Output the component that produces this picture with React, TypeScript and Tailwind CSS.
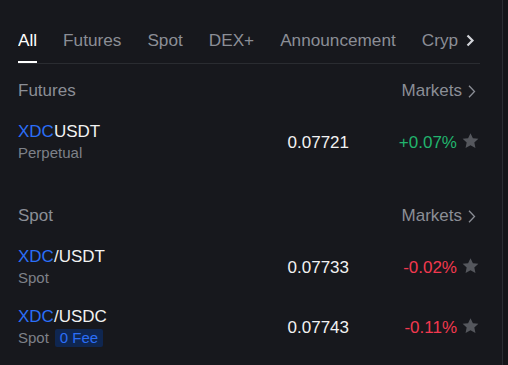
import React from 'react';

type Row = {
  base: string;
  sep: string;
  quote: string;
  sub: string;
  fee?: boolean;
  price: string;
  change: string;
  up: boolean;
};

const TABS = ['All', 'Futures', 'Spot', 'DEX+', 'Announcement', 'Crypto'];

const SECTIONS: { title: string; rows: Row[] }[] = [
  {
    title: 'Futures',
    rows: [{ base: 'XDC', sep: '', quote: 'USDT', sub: 'Perpetual', price: '0.07721', change: '+0.07%', up: true }],
  },
  {
    title: 'Spot',
    rows: [
      { base: 'XDC', sep: '/', quote: 'USDT', sub: 'Spot', price: '0.07733', change: '-0.02%', up: false },
      { base: 'XDC', sep: '/', quote: 'USDC', sub: 'Spot', fee: true, price: '0.07743', change: '-0.11%', up: false },
    ],
  },
];

function Star() {
  return (
    <svg width="19" height="18" viewBox="0 0 24 24" className="shrink-0">
      <path
        d="M12 1.5l3.2 6.7 7.3.9-5.4 5 1.5 7.3L12 17.8l-6.6 3.6 1.5-7.3-5.4-5 7.3-.9z"
        fill="#55575d"
      />
    </svg>
  );
}

function Chevron({ bold }: { bold?: boolean }) {
  return bold ? (
    <svg width="10" height="13" viewBox="0 0 10 13">
      <path d="M2.5 1.5l5 5-5 5" fill="none" stroke="#d2d4d9" strokeWidth="2.2" />
    </svg>
  ) : (
    <svg width="10" height="13" viewBox="0 0 10 13">
      <path d="M2 0.8l5.5 5.7L2 12.2" fill="none" stroke="#8b8e96" strokeWidth="1.3" />
    </svg>
  );
}

export default function App() {
  return (
    <div className="flex h-[365px] w-[508px] bg-[#141519]" style={{ fontFamily: '"Liberation Sans", Arial, sans-serif' }}>
      <div className="h-full w-[503px] border-r border-[#2a2c32] bg-[#17181d] pl-[18px] pr-[22px]">
        {/* Tabs */}
        <div className="flex items-start border-b border-[#2a2c31] pt-[28px]">
          <div className="flex flex-1 gap-[26px] overflow-hidden whitespace-nowrap text-[17.2px] leading-[24px]">
            {TABS.map((t, i) => (
              <div key={t} className={`shrink-0 pb-[9px] ${i === 0 ? 'text-white font-medium' : 'text-[#8b8e96]'}`}>
                {t}
                {i === 0 && <div className="mt-[9px] -mb-[9px] h-[2px] bg-white" />}
              </div>
            ))}
          </div>
          <div className="flex h-[24px] w-[22px] shrink-0 items-center justify-end pr-[5px] bg-[#17181d]">
            <Chevron bold />
          </div>
        </div>

        {SECTIONS.map((s, si) => (
          <div key={s.title} className={si === 0 ? 'mb-[13px] pt-[1px]' : ''}>
            <div className="flex h-[52px] items-center justify-between text-[17px] text-[#8b8e96]">
              <span>{s.title}</span>
              <span className="flex items-center gap-[5px] pr-[3px]">
                Markets
                <Chevron />
              </span>
            </div>
            {s.rows.map((r) => (
              <div key={r.quote + r.sub} className="flex h-[60px] items-start pt-[4px]">
                <div className="flex-1">
                  <div className="text-[17px] leading-[22px] text-[#f2f2f2]">
                    <span className="text-[#2b6ef7]">{r.base}</span>
                    {r.sep}
                    {r.quote}
                  </div>
                  <div className="flex h-[20px] items-center gap-[6px] text-[15px] text-[#7e8189]">
                    <span>{r.sub}</span>
                    {r.fee && (
                      <span className="rounded-[2px] bg-[#0f2650] px-[5px] text-[15px] leading-[18px] text-[#2b6ef7]">
                        0 Fee
                      </span>
                    )}
                  </div>
                </div>
                <div className="flex h-[44px] items-center">
                  <span className="w-[80px] text-right text-[17px] text-[#f2f2f2]">{r.price}</span>
                  <span className={`w-[108px] text-right text-[17px] ${r.up ? 'text-[#21b46d]' : 'text-[#f2384f]'}`}>
                    {r.change}
                  </span>
                  <span className="ml-[4px] -mt-[4px]">
                    <Star />
                  </span>
                </div>
              </div>
            ))}
          </div>
        ))}
      </div>
    </div>
  );
}
